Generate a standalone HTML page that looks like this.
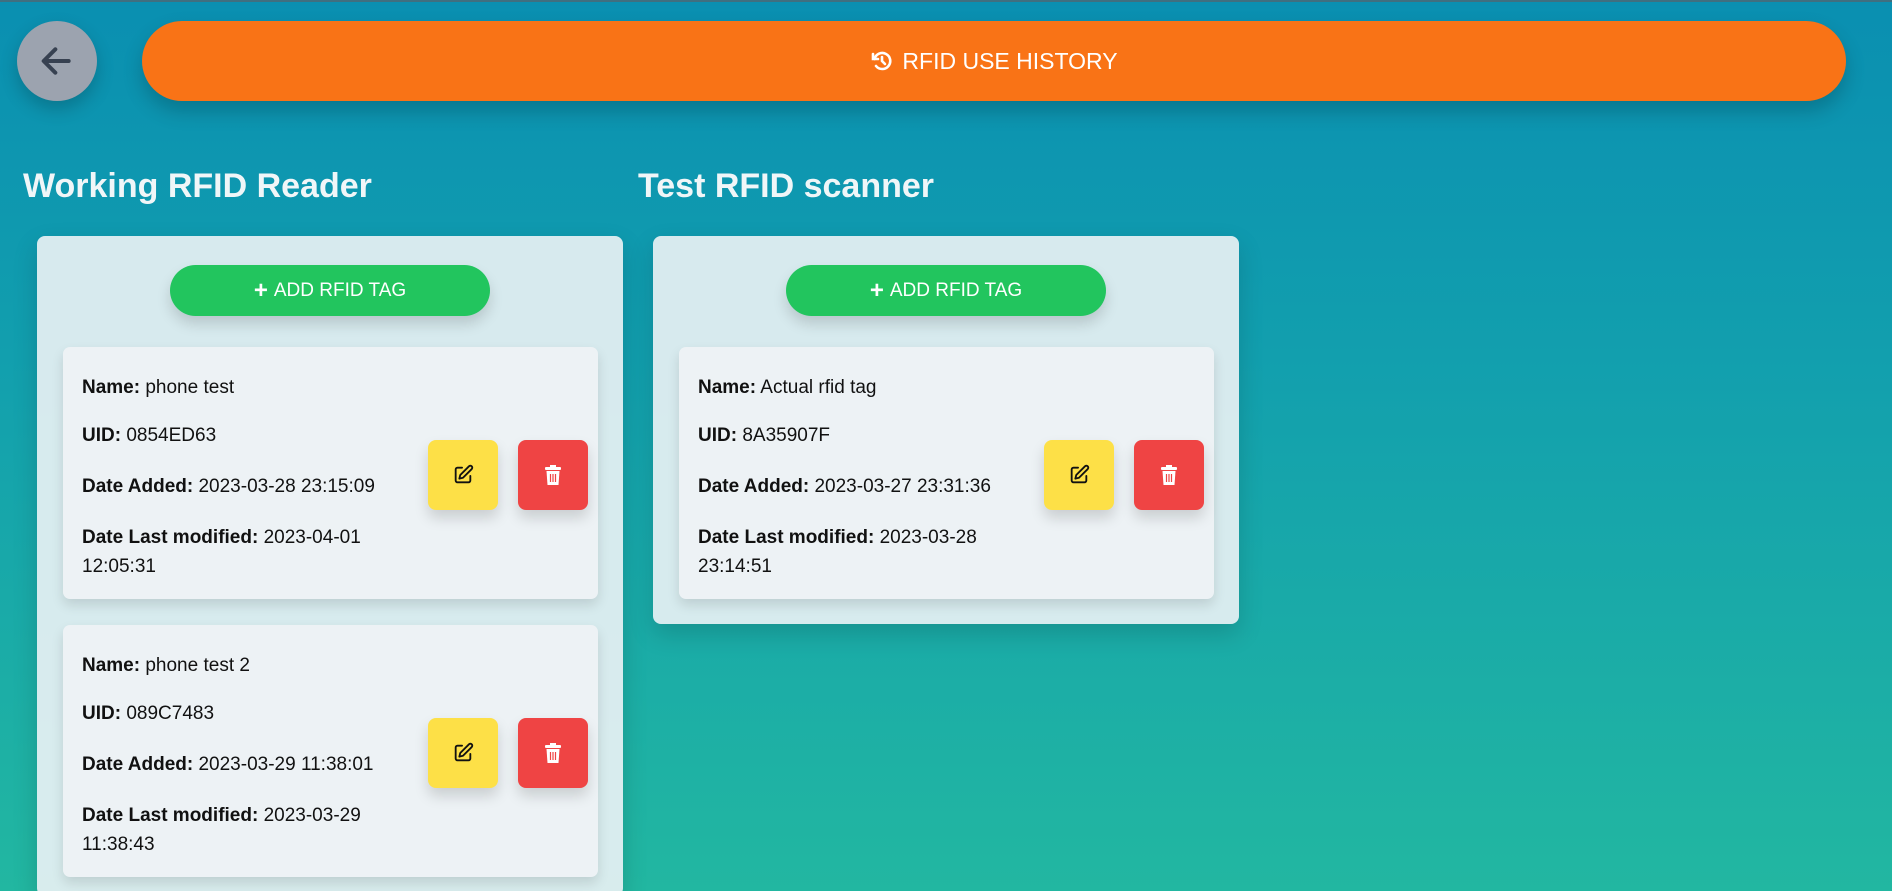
<!DOCTYPE html>
<html style="width:1892px;height:891px;overflow:hidden;background:#22b7a1"><head><meta charset="utf-8"><style>
*{box-sizing:border-box;margin:0;padding:0}
body{width:1892px;height:891px;overflow:hidden;font-family:"Liberation Sans",sans-serif;background:linear-gradient(180deg,#0a8fb1 0%,#129fae 40%,#22b7a1 100%);position:relative}
.topline{position:absolute;left:0;top:0;width:1892px;height:2px;background:#3f6f80}
.back{position:absolute;left:17px;top:21px;width:80px;height:80px;border-radius:50%;background:#9ca3af;box-shadow:0 8px 18px rgba(0,0,0,.2);display:flex;align-items:center;justify-content:center}
.hist{position:absolute;left:142px;top:21px;width:1704px;height:80px;border-radius:40px;background:#f97316;box-shadow:0 10px 20px rgba(0,0,0,.2);color:#fff;font-size:23px;display:flex;align-items:center;justify-content:center;gap:8px}
h2{position:absolute;color:#f0f6f8;font-size:34px;font-weight:bold;top:167px}
.card{position:absolute;background:rgba(230,240,243,.93);border-radius:8px;box-shadow:0 10px 25px rgba(0,0,0,.15)}
.add{position:absolute;left:133px;top:29px;width:320px;height:51px;border-radius:26px;background:#22c55e;color:#fff;font-size:19px;display:flex;align-items:center;justify-content:center;box-shadow:0 8px 14px rgba(0,0,0,.15)}
.item{position:absolute;left:26px;width:535px;height:252px;background:#edf2f5;border-radius:7px;box-shadow:0 6px 12px rgba(0,0,0,.12);color:#111;font-size:19px}
.item p{position:absolute;left:19px;line-height:29px;white-space:nowrap}
.btn{position:absolute;top:93px;width:70px;height:70px;border-radius:8px;display:flex;align-items:center;justify-content:center;box-shadow:0 8px 14px rgba(0,0,0,.15)}
.e{left:365px;background:#fde047}.d{left:455px;background:#ef4444}
</style></head><body>
<div class="topline"></div>
<div class="back"><svg width="40" height="40" viewBox="0 0 24 24" fill="none" stroke="#374151" stroke-width="2.4" stroke-linecap="round" stroke-linejoin="round"><path d="M19 12H5M11 5l-7 7 7 7"/></svg></div>
<div class="hist"><svg width="24" height="24" viewBox="0 0 24 24" fill="none" stroke="#fff" stroke-width="2.6" stroke-linecap="round"><path d="M4.5 10A8 8 0 1 1 6 17"/><path d="M3 5v5h5" /><path d="M12 8v4l3 3"/></svg>RFID USE HISTORY</div>
<h2 style="left:23px">Working RFID Reader</h2>
<h2 style="left:638px">Test RFID scanner</h2>

<div class="card" style="left:37px;top:236px;width:586px;height:660px">
<div class="add"><b style="font-size:24px;margin-right:6px">+</b>ADD RFID TAG</div>
<div class="item" style="top:111px">
<p style="top:26px"><b>Name:</b> phone test</p>
<p style="top:74px"><b>UID:</b> 0854ED63</p>
<p style="top:125px"><b>Date Added:</b> 2023-03-28 23:15:09</p>
<p style="top:176px"><b>Date Last modified:</b> 2023-04-01<br>12:05:31</p>
<div class="btn e"><svg width="22" height="22" viewBox="0 0 24 24" fill="none" stroke="#111" stroke-width="2" stroke-linecap="round" stroke-linejoin="round"><path d="M11 4H6a2 2 0 0 0-2 2v12a2 2 0 0 0 2 2h12a2 2 0 0 0 2-2v-5"/><path d="M18.5 2.5a2.1 2.1 0 0 1 3 3L12 15l-4 1 1-4z"/></svg></div>
<div class="btn d"><svg width="20" height="22" viewBox="0 0 20 22"><rect x="2" y="3" width="16" height="3" rx="1" fill="#fff"/><rect x="7" y="1" width="6" height="3" fill="#fff"/><path d="M3.5 7h13l-1 14h-11z" fill="#fff"/><path d="M7.5 10v8M10 10v8M12.5 10v8" stroke="#ef4444" stroke-width="1.2"/></svg></div>
</div>
<div class="item" style="top:389px">
<p style="top:26px"><b>Name:</b> phone test 2</p>
<p style="top:74px"><b>UID:</b> 089C7483</p>
<p style="top:125px"><b>Date Added:</b> 2023-03-29 11:38:01</p>
<p style="top:176px"><b>Date Last modified:</b> 2023-03-29<br>11:38:43</p>
<div class="btn e"><svg width="22" height="22" viewBox="0 0 24 24" fill="none" stroke="#111" stroke-width="2" stroke-linecap="round" stroke-linejoin="round"><path d="M11 4H6a2 2 0 0 0-2 2v12a2 2 0 0 0 2 2h12a2 2 0 0 0 2-2v-5"/><path d="M18.5 2.5a2.1 2.1 0 0 1 3 3L12 15l-4 1 1-4z"/></svg></div>
<div class="btn d"><svg width="20" height="22" viewBox="0 0 20 22"><rect x="2" y="3" width="16" height="3" rx="1" fill="#fff"/><rect x="7" y="1" width="6" height="3" fill="#fff"/><path d="M3.5 7h13l-1 14h-11z" fill="#fff"/><path d="M7.5 10v8M10 10v8M12.5 10v8" stroke="#ef4444" stroke-width="1.2"/></svg></div>
</div>
</div>

<div class="card" style="left:653px;top:236px;width:586px;height:388px">
<div class="add"><b style="font-size:24px;margin-right:6px">+</b>ADD RFID TAG</div>
<div class="item" style="top:111px">
<p style="top:26px"><b>Name:</b> Actual rfid tag</p>
<p style="top:74px"><b>UID:</b> 8A35907F</p>
<p style="top:125px"><b>Date Added:</b> 2023-03-27 23:31:36</p>
<p style="top:176px"><b>Date Last modified:</b> 2023-03-28<br>23:14:51</p>
<div class="btn e"><svg width="22" height="22" viewBox="0 0 24 24" fill="none" stroke="#111" stroke-width="2" stroke-linecap="round" stroke-linejoin="round"><path d="M11 4H6a2 2 0 0 0-2 2v12a2 2 0 0 0 2 2h12a2 2 0 0 0 2-2v-5"/><path d="M18.5 2.5a2.1 2.1 0 0 1 3 3L12 15l-4 1 1-4z"/></svg></div>
<div class="btn d"><svg width="20" height="22" viewBox="0 0 20 22"><rect x="2" y="3" width="16" height="3" rx="1" fill="#fff"/><rect x="7" y="1" width="6" height="3" fill="#fff"/><path d="M3.5 7h13l-1 14h-11z" fill="#fff"/><path d="M7.5 10v8M10 10v8M12.5 10v8" stroke="#ef4444" stroke-width="1.2"/></svg></div>
</div>
</div>
</body></html>
